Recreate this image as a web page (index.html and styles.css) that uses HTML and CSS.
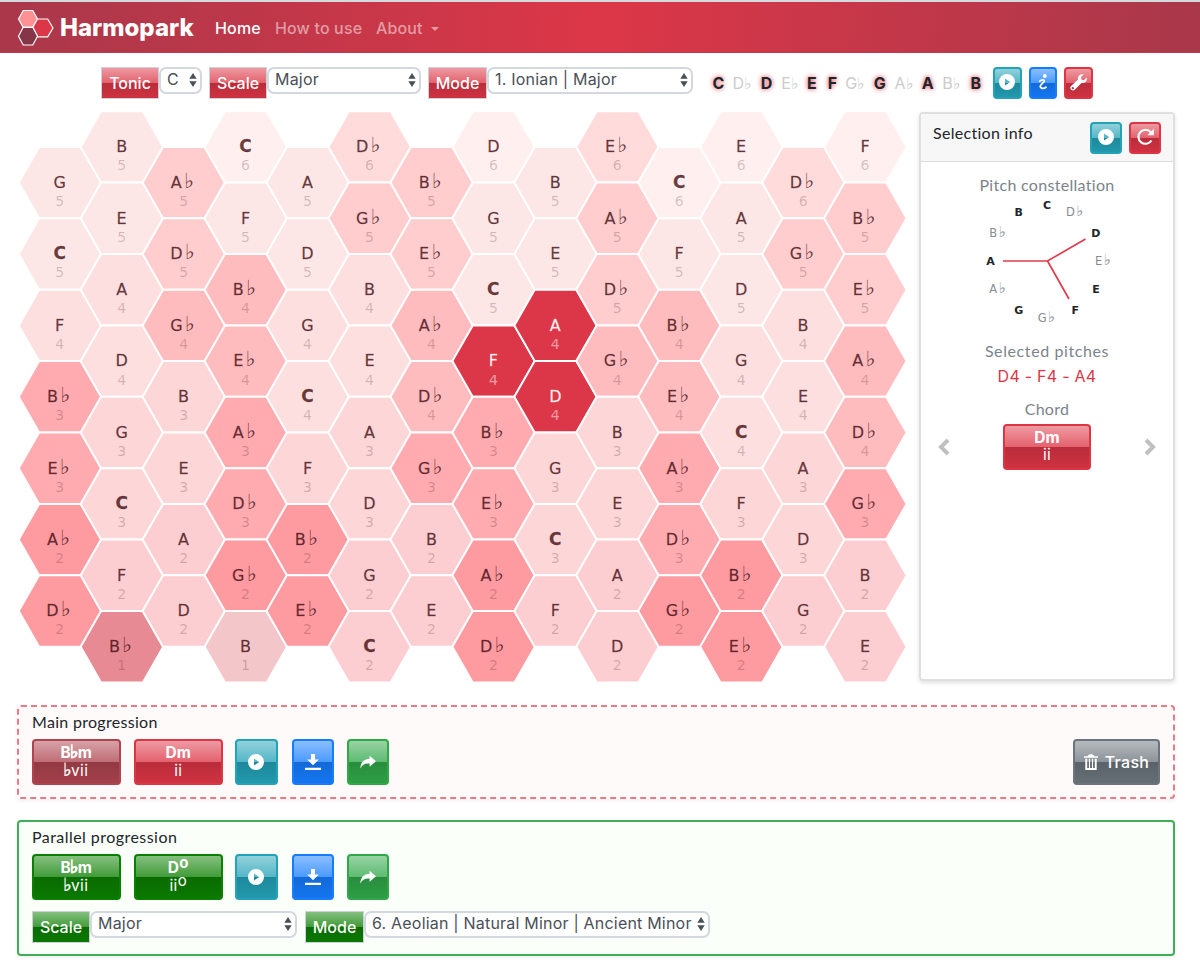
FILE: index.html
```html
<!DOCTYPE html>
<html lang="en">
<head>
<meta charset="utf-8">
<title>Harmopark</title>
<link rel="stylesheet" href="styles.css">
</head>
<body>
<svg class="defs" aria-hidden="true">
  <symbol id="play" viewBox="0 0 16 16"><path fill-rule="evenodd" d="M8 0a8 8 0 1 0 0 16A8 8 0 0 0 8 0zM6 4.600v6.800L11.200 8z"/></symbol>
  <symbol id="download" viewBox="0 0 16 16"><path d="M6 0h4v5.500h3.800L8 11.300 2.200 5.500H6zM0 13.800h16V16H0z"/></symbol>
  <symbol id="share" viewBox="0 0 16 16"><path d="M9.600 1.800L16 7.300l-6.400 5.400V9.600C5 9.200 2.200 10.800.3 14.500.4 9 3.600 5 9.600 4.800z"/></symbol>
  <symbol id="info" viewBox="0 0 16 16"><circle cx="9.800" cy="2" r="1.900"/><path d="M4.800 7.200c1.600-1.700 4.700-2 4.400 0-.3 1.400-3.700 2.900-3.900 5-.2 2.500 3.500 2.900 5.700 1.100" fill="none" stroke="currentColor" stroke-width="1.800" stroke-linecap="round"/></symbol>
  <symbol id="wrench" viewBox="0 0 16 16"><path d="M15.700 3.300l-2.600 2.500-2.300-.5-.5-2.200L12.900.4C9.900-.6 6.900 1.800 7.500 5.100L.8 11.600c-1.800 2 1.400 5.100 3.400 3.500l6.700-6.600c3.300.6 5.800-2.200 4.800-5.200zM2.600 14.300a1 1 0 1 1 0-2 1 1 0 0 1 0 2z"/></symbol>
  <symbol id="reload" viewBox="0 0 16 16"><path d="M13.600 11.700A6.600 6.600 0 1 1 13 4" fill="none" stroke="currentColor" stroke-width="2"/><path d="M15.800.8v6H9.800z"/></symbol>
  <symbol id="trash" viewBox="0 0 14 16"><path d="M0 2.300h3.500C4.500.7 5.300.3 7 .3s2.500.4 3.500 2H14v1.500H0zM1.300 4.800h1.900V14h1.700V4.800h1.200V14h1.800V4.800h1.200V14h1.700V4.800h1.900V16H1.300z"/></symbol>
  <symbol id="updown" viewBox="0 0 8 14"><path d="M4 0l3.700 5.800H.3zM4 14L.3 8.200h7.400z"/></symbol>
</svg>

<header class="navbar">
  <svg class="logo" viewBox="0 0 38 38">
    <path class="logo-a" d="M6.200 1.500h9.600l4.700 8.500-4.700 8.300H6.200L1.500 10z"/>
    <path class="logo-b" d="M20.500 10h10.200l5.300 9-5.300 8.800H20.700l-4.900-9.500z"/>
    <path class="logo-c" d="M6.200 18.300h9.600l4.700 9-4.700 8.700H6.200l-4.700-8.700z"/>
  </svg>
  <span class="brand">Harmopark</span>
  <a class="nav-link active">Home</a>
  <a class="nav-link howto">How to use</a>
  <a class="nav-link about">About<i class="caret"></i></a>
</header>

<div class="toolbar">
  <span class="label red tonic">Tonic</span><span class="select s-tonic">C<svg><use href="#updown"/></svg></span>
  <span class="label red scale">Scale</span><span class="select s-scale">Major<svg><use href="#updown"/></svg></span>
  <span class="label red mode">Mode</span><span class="select s-mode">1. Ionian | Major<svg><use href="#updown"/></svg></span>
  <div class="pitches"><b>C</b><i>D♭</i><b>D</b><i>E♭</i><b>E</b><b>F</b><i>G♭</i><b>G</b><i>A♭</i><b>A</b><i>B♭</i><b>B</b></div>
  <div class="tools">
    <button class="btn cyan"><svg><use href="#play"/></svg></button>
    <button class="btn blue"><svg><use href="#info"/></svg></button>
    <button class="btn red"><svg class="big"><use href="#wrench"/></svg></button>
  </div>
</div>

<main class="board">
  <svg class="tonnetz" id="tonnetz" viewBox="17 107 895 580"></svg>
  <aside class="panel">
    <div class="panel-head">
      <h2>Selection info</h2>
      <button class="btn cyan"><svg><use href="#play"/></svg></button>
      <button class="btn red"><svg class="big"><use href="#reload"/></svg></button>
    </div>
    <h3 class="t-constellation">Pitch constellation</h3>
    <svg class="constellation" id="constellation" viewBox="977 196 140 132">
      <path d="M1003 261H1047.500L1085.500 239M1047.500 261L1069 299"/>
    </svg>
    <h3 class="t-selected">Selected pitches</h3>
    <p class="selected">D4 - F4 - A4</p>
    <h3 class="t-chord">Chord</h3>
    <div class="chooser">
      <svg class="arrow" viewBox="0 0 12 18"><path d="M10 2L3 9l7 7"/></svg>
      <button class="btn red chord"><b>Dm</b><span>ii</span></button>
      <svg class="arrow" viewBox="0 0 12 18"><path d="M2 2l7 7-7 7"/></svg>
    </div>
  </aside>
</main>

<section class="progression main-prog">
  <h2 class="t-main">Main progression</h2>
  <div class="row">
    <button class="btn maroon chord"><b>B<i>♭</i>m</b><span><i>♭</i>vii</span></button>
    <button class="btn red chord"><b>Dm</b><span>ii</span></button>
    <button class="btn cyan act"><svg><use href="#play"/></svg></button>
    <button class="btn blue act"><svg><use href="#download"/></svg></button>
    <button class="btn green act"><svg><use href="#share"/></svg></button>
    <button class="btn gray trash"><svg><use href="#trash"/></svg>Trash</button>
  </div>
</section>

<section class="progression parallel">
  <h2 class="t-parallel">Parallel progression</h2>
  <div class="row">
    <button class="btn forest chord"><b>B<i>♭</i>m</b><span><i>♭</i>vii</span></button>
    <button class="btn forest chord"><b>D<sup>o</sup></b><span>ii<sup>o</sup></span></button>
    <button class="btn cyan act"><svg><use href="#play"/></svg></button>
    <button class="btn blue act"><svg><use href="#download"/></svg></button>
    <button class="btn green act"><svg><use href="#share"/></svg></button>
  </div>
  <div class="row selects">
    <span class="label forest scale">Scale</span><span class="select p-scale">Major<svg><use href="#updown"/></svg></span>
    <span class="label forest mode">Mode</span><span class="select p-mode">6. Aeolian | Natural Minor | Ancient Minor<svg><use href="#updown"/></svg></span>
  </div>
</section>
<script src="app.js"></script>
</body>
</html>
```
FILE: styles.css
```css
* { box-sizing: border-box; }
body { margin: 0; height: 974px; overflow: hidden; background: #fff; color: #212529; font: 16px Inter, sans-serif; letter-spacing: .5px; }
h2, h3, p { margin: 0; font-weight: 400; }
.defs { display: none; }
svg { fill: currentColor; flex: none; }

.navbar { height: 53px; border-top: 2px solid #d5dae0; display: flex; align-items: center; padding-left: 17px; color: #fff;
  background: linear-gradient(97deg, #a8384a 0%, #dc3748 50%, #a8384a 100%); border-bottom: 1px solid #c23a4b; }
.logo { width: 38px; height: 38px; stroke: #fff; stroke-width: 1.2; margin-top: 1px; }
.logo-a { fill: #ff9094; }
.logo-b { fill: #dc3748; }
.logo-c { fill: #853546; }
.brand { width: 160px; padding-left: 5px; font-size: 24px; font-weight: 800; letter-spacing: 0; white-space: nowrap; }
.nav-link { color: rgba(255,255,255,.5); font-size: 16px; font-weight: 500; letter-spacing: .15px; white-space: nowrap; margin-top: 1px; }
.nav-link.active { color: #fff; width: 60px; }
.howto { width: 101px; }
.caret { display: inline-block; margin-left: 8px; vertical-align: 3px; border: 4.500px solid transparent; border-top-color: currentColor; border-bottom: 0; }

.toolbar { height: 59px; padding: 14px 0 0 101px; display: flex; align-items: flex-start; }
.label { height: 32px; border: 1.500px solid #ccd2d9; color: #fff; font-weight: 500; letter-spacing: 0; display: flex; align-items: center; justify-content: center; flex: none; padding-bottom: 1px; }
.label.tonic { width: 58px; }
.label.scale { width: 58px; }
.label.mode { width: 59px; }
.select { height: 27px; border: 2px solid #d3d8df; border-radius: 7px; background: #fff; color: #495057; display: flex; align-items: center; justify-content: space-between; padding: 0 3px 4px 6px; white-space: nowrap; flex: none; font-size: 16px; letter-spacing: .2px; }
.select svg { width: 8px; height: 14px; margin-top: 3px; }
.s-tonic { width: 43px; margin-right: 7px; }
.s-scale { width: 154px; margin-right: 7px; }
.s-mode { width: 206px; margin-right: 14px; }
.pitches { display: grid; grid-template-columns: 23px 24.500px 24px 23px 20.500px 21px 24.500px 24.500px 24px 23.500px 24px 24.500px; height: 32px; align-items: center; justify-items: center; letter-spacing: 0; margin-right: 5px; }
.pitches b { font-weight: 700; text-shadow: 0 0 5px rgba(220,53,69,.75), 0 0 4px rgba(220,53,69,.35); }
.pitches i { font-style: normal; color: #ccc; white-space: nowrap; }
.tools { display: flex; gap: 7px; }

.btn { border: 2px solid; border-radius: 4px; padding: 0; color: #fff; display: flex; align-items: center; justify-content: center; font: inherit; letter-spacing: .5px; flex: none; }
.btn, .label { background-image: linear-gradient(rgba(255,255,255,.5), rgba(255,255,255,.22) 50%, rgba(0,0,0,.16) 50%, rgba(0,0,0,.06)); background-origin: padding-box; }
.btn svg { color: #fff; width: 16px; height: 16px; margin-top: -2px; }
.tools .btn { width: 28.500px; height: 32px; }
.btn svg.big { width: 17px; height: 17px; }
.red { background-color: #dc3545; }
.cyan { background-color: #24a2b8; }
.blue { background-color: #167dff; }
.green { background-color: #30a84a; }
.forest { background-color: #0b8000; }
.maroon { background-color: #ae444f; }
.gray { background-color: #6c757d; }
.btn.red { border-color: #dc3545; }
.btn.cyan { border-color: #24a2b8; }
.btn.blue { border-color: #167dff; }
.btn.green { border-color: #30a84a; }
.btn.forest { border-color: #0b8000; }
.btn.maroon { border-color: #ae444f; }
.btn.gray { border-color: #6c757d; }

.board { display: flex; height: 593px; padding-left: 17px; }
.tonnetz { width: 895px; height: 580px; margin-top: -5px; }
.tonnetz text { font-family: "DejaVu Sans", sans-serif; text-anchor: middle; letter-spacing: 0; }
.tonnetz .note { font-size: 16px; fill: #400a10; fill-opacity: .8; stroke: #400a10; stroke-opacity: .5; stroke-width: .3; }
.tonnetz .tonic-note { font-size: 17px; }
.tonnetz .flat { font-size: 21px; stroke-width: 0; }
.tonnetz .octave { font-size: 14px; fill: #400a10; fill-opacity: .22; }
.tonnetz .on { fill: #fff; fill-opacity: .92; stroke: #fff; }
.tonnetz .octave.on { fill-opacity: .5; stroke: none; }
.tonnetz polygon { stroke: #fff; stroke-width: 2; }

.panel { width: 256px; height: 569px; margin-left: 7px; margin-top: -.5px; border: 2px solid #dfdfdf; border-radius: 4px; box-shadow: 0 2px 4px rgba(0,0,0,.12); text-align: center; }
.panel-head { height: 48px; background: #f7f7f7; border-bottom: 1.500px solid #dcdcdc; display: flex; align-items: center; padding: 1px 12px 0 12px; gap: 7px; }
.panel-head h2 { flex: 1; text-align: left; padding-bottom: 10px; }
.panel-head .btn { width: 32px; height: 32px; }
h2 { font: 16px/20px Lato, sans-serif; letter-spacing: .3px; }
h3 { font: 16px/20px Lato, sans-serif; letter-spacing: .3px; color: #7c848b; }
.t-constellation { padding-top: 13px; }
.constellation { display: block; width: 140px; height: 132px; margin: 1px auto 0 56px; }
.constellation path { fill: none; stroke: #e23c4e; stroke-width: 1.700; }
.constellation text { font: 11.500px "DejaVu Sans", sans-serif; letter-spacing: 0; text-anchor: middle; fill: #868c92; }
.constellation .in { font-weight: 700; font-size: 11px; fill: #212529; }
.constellation .flat { font-size: 14.500px; }
.t-selected { margin-top: 13px; letter-spacing: .6px; }
.selected { color: #dc3545; line-height: 22px; margin-top: 4px; letter-spacing: .25px; }
.t-chord { margin-top: 12px; }
.chooser { display: flex; justify-content: space-between; align-items: center; padding: 0 17px; margin-top: 5px; }
.arrow { width: 12px; height: 18px; }
.arrow path { fill: none; stroke: #c0c0c0; stroke-width: 4; }

.btn.chord { width: 88.500px; height: 46px; flex-direction: column; line-height: 17.500px; padding-bottom: 1px; letter-spacing: .3px; }
.chord b { font-weight: 700; letter-spacing: .2px; }
.chord b, .chord span { height: 17.500px; font-size: 15.500px; }
.chord i { font: 18px/0 "DejaVu Sans", sans-serif; margin: 0 -1px 0 -1px; -webkit-text-stroke: .4px #fff; }
.chord b i { -webkit-text-stroke: 1px #fff; }
.chord sup { font-size: 15px; line-height: 0; vertical-align: 5px; }

.progression { margin: 0 25px 0 17px; border-radius: 4px; padding: 8px 13px 0; box-shadow: 0 2px 4px rgba(0,0,0,.06); }
.main-prog { height: 94px; border: 2px dashed #ea7b86; background: #fffafa; padding-top: 5px; }
.parallel { height: 136px; margin-top: 21px; border: 2px solid #3fae57; background: #fafffa; padding-top: 5px; }
.progression h2 { line-height: 19px; }
h2.t-parallel { letter-spacing: .45px; }
.row { display: flex; margin-top: 8px; }
.row .chord + .chord { margin-left: 13.500px; }
.btn.act { width: 42.500px; height: 46px; margin-left: 12.500px; }
.btn.act.blue { margin-left: 14px; }
.btn.trash { width: 87px; height: 46px; margin-left: auto; gap: 7px; font-weight: 500; letter-spacing: .3px; padding-bottom: 1px; }
.btn.trash svg { width: 14px; margin-top: 0; }
.btn.act svg { margin-top: -1px; }
.selects { margin-top: 11px; }
.p-scale { width: 207px; margin-right: 8px; }
.p-mode { width: 346px; }
```
FILE: app.js
```js
const NS = 'http://www.w3.org/2000/svg';
const columns = [
  'G5 C5 F4 Bb3 Eb3 Ab2 Db2', 'B5 E5 A4 D4 G3 C3 F2 Bb1',
  'Ab5 Db5 Gb4 B3 E3 A2 D2', 'C6 F5 Bb4 Eb4 Ab3 Db3 Gb2 B1',
  'A5 D5 G4 C4 F3 Bb2 Eb2', 'Db6 Gb5 B4 E4 A3 D3 G2 C2',
  'Bb5 Eb5 Ab4 Db4 Gb3 B2 E2', 'D6 G5 C5 F4* Bb3 Eb3 Ab2 Db2',
  'B5 E5 A4* D4* G3 C3 F2', 'Eb6 Ab5 Db5 Gb4 B3 E3 A2 D2',
  'C6 F5 Bb4 Eb4 Ab3 Db3 Gb2', 'E6 A5 D5 G4 C4 F3 Bb2 Eb2',
  'Db6 Gb5 B4 E4 A3 D3 G2', 'F6 Bb5 Eb5 Ab4 Db4 Gb3 B2 E2'
];
const natural = { 6: '#ffefee', 5: '#fde7e6', 4: '#fddfdf', 3: '#fdd6d7', 2: '#fdced1', 1: '#f3c6c9' };
const flat = { 6: '#ffdcdb', 5: '#ffcdcd', 4: '#ffbcbe', 3: '#ffabaf', 2: '#fe9ba1', 1: '#e88a93' };

function add(parent, tag, attrs, text) {
  const el = document.createElementNS(NS, tag);
  for (const k in attrs) el.setAttribute(k, attrs[k]);
  if (text) el.textContent = text;
  parent.appendChild(el);
  return el;
}

const grid = document.getElementById('tonnetz');
columns.forEach((col, i) => {
  const cx = 60 + i * 61.95;
  col.split(' ').forEach((n, j) => {
    const cy = (i % 2 ? 146.9 : 182.6) + j * 71.4;
    const on = n.endsWith('*');
    const isFlat = n[1] === 'b';
    const oct = n.replace(/\D/g, '');
    const pts = [[-41.3, 0], [-20.9, -35.7], [20.9, -35.7], [41.3, 0], [20.9, 35.7], [-20.9, 35.7]]
      .map(p => (cx + p[0]) + ',' + (cy + p[1])).join(' ');
    add(grid, 'polygon', { points: pts, fill: on ? '#dc3748' : (isFlat ? flat : natural)[oct] });
    const cls = 'note' + (on ? ' on' : '') + (n[0] === 'C' ? ' tonic-note' : '');
    const weight = n[0] === 'C' ? 700 : 400;
    const t = add(grid, 'text', { x: isFlat ? cx - 1.5 : cx - 0.3, y: cy + 5.3, class: cls, 'font-weight': weight });
    t.textContent = n[0];
    if (isFlat) add(t, 'tspan', { dx: 2.2, class: 'flat' }, '♭');
    add(grid, 'text', { x: cx - 0.3, y: cy + 23.4, class: 'octave' + (on ? ' on' : '') }, oct);
  });
});

const ring = document.getElementById('constellation');
['C', 'D♭', 'D', 'E♭', 'E', 'F', 'G♭', 'G', 'A♭', 'A', 'B♭', 'B'].forEach((n, k) => {
  const a = k * Math.PI / 6;
  const t = add(ring, 'text', { x: 1047 + 56.5 * Math.sin(a) - (n[1] ? 0.7 : 0), y: 265 - 56.5 * Math.cos(a), class: n[1] ? 'out' : 'in' });
  t.textContent = n[0];
  if (n[1]) add(t, 'tspan', { dx: 1.5, class: 'flat' }, '♭');
});
```
